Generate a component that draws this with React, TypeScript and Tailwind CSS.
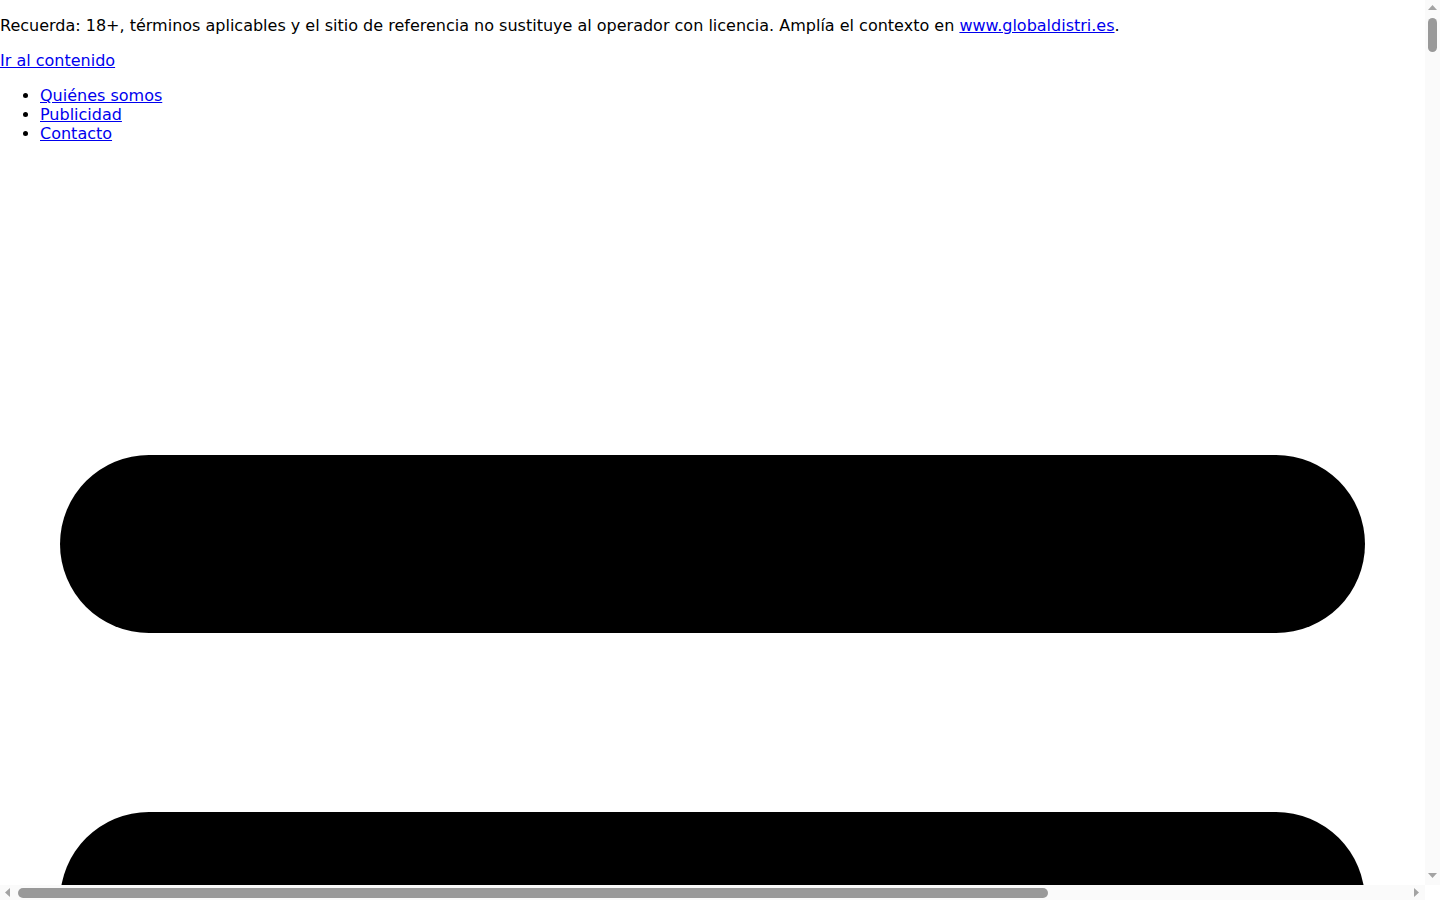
const pills = [0, 1, 2];

function Arrow({ dir }: { dir: "up" | "down" | "left" | "right" }) {
  const pts = {
    up: "0,5 4.5,0 9,5",
    down: "0,0 9,0 4.5,5",
    left: "5,0 5,9 0,4.5",
    right: "0,0 0,9 5,4.5",
  }[dir];
  const vertical = dir === "up" || dir === "down";
  return (
    <svg width={vertical ? 9 : 5} height={vertical ? 5 : 9} viewBox={vertical ? "0 0 9 5" : "0 0 5 9"}>
      <polygon points={pts} fill="#a3a3a3" />
    </svg>
  );
}

export default function App() {
  return (
    <div className="flex h-[900px] w-[1440px] flex-col overflow-hidden bg-white font-['DejaVu_Sans','Liberation_Sans',sans-serif] text-base leading-[normal] text-black">
      <div className="flex h-[885px]">
        {/* Page */}
        <div className="w-[1425px] overflow-hidden">
          <p className="my-4">
            Recuerda: 18+, términos aplicables y el sitio de referencia no sustituye al operador con licencia. Amplía
            el contexto en{" "}
            <a href="#" className="text-[#0000ee] underline">
              www.globaldistri.es
            </a>
            .
          </p>

          <p className="my-4">
            <a href="#contenido" className="text-[#0000ee] underline">
              Ir al contenido
            </a>
          </p>

          <ul className="my-4 list-disc pl-10">
            <li>
              <a href="#" className="text-[#0000ee] underline">
                Quiénes somos
              </a>
            </li>
            <li>
              <a href="#" className="text-[#0000ee] underline">
                Publicidad
              </a>
            </li>
            <li>
              <a href="#" className="text-[#0000ee] underline">
                Contacto
              </a>
            </li>
          </ul>

          {/* Unstyled shapes */}
          <div id="contenido" className="flex flex-col gap-[179px] pt-[296px]">
            {pills.map((i) => (
              <div key={i} className="mx-[60px] h-[178px] shrink-0 rounded-full bg-black" />
            ))}
          </div>
        </div>

        {/* Vertical scrollbar */}
        <div className="flex w-[15px] flex-col items-center bg-[#fafafa]">
          <div className="flex h-[15px] items-center justify-center">
            <Arrow dir="up" />
          </div>
          <div className="mt-[3px] h-[34px] w-[9px] rounded-full bg-[#999999]" />
          <div className="flex-1" />
          <div className="flex h-[15px] items-start justify-center pt-[3px]">
            <Arrow dir="down" />
          </div>
        </div>
      </div>

      <div className="flex h-[15px]">
        {/* Horizontal scrollbar */}
        <div className="flex w-[1425px] items-center bg-[#fafafa]">
          <div className="flex w-[15px] justify-center">
            <Arrow dir="left" />
          </div>
          <div className="ml-[3px] h-[10px] w-[1030px] rounded-full bg-[#999999]" />
          <div className="flex-1" />
          <div className="flex w-[15px] justify-center pr-[3px]">
            <Arrow dir="right" />
          </div>
        </div>
        <div className="w-[15px] bg-white" />
      </div>
    </div>
  );
}
